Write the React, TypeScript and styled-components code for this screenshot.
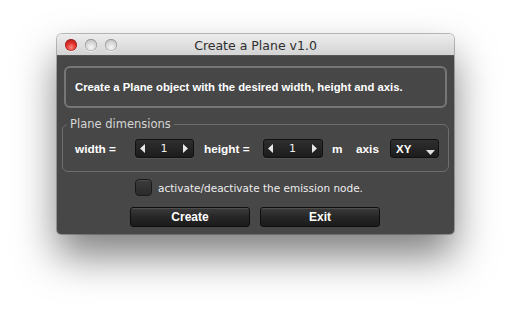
import React from "react";
import styled, { createGlobalStyle } from "styled-components";

const Global = createGlobalStyle`
  html, body { margin: 0; padding: 0; background: #ffffff; }
  body { font-family: "DejaVu Sans", "Liberation Sans", sans-serif; }
  * { box-sizing: border-box; }
`;

const boldFont = `"Liberation Sans", Arial, sans-serif`;

const Page = styled.div`
  width: 511px;
  height: 313px;
  padding: 34px 0 0 57px;
  background: #ffffff;
`;

const Window = styled.div`
  width: 397px;
  border-radius: 5px 5px 4px 4px;
  box-shadow: 0 22px 40px rgba(0, 0, 0, 0.5), 0 0 0 1px rgba(0, 0, 0, 0.25);
  overflow: hidden;
`;

const TitleBar = styled.div`
  height: 22px;
  display: flex;
  align-items: center;
  background: linear-gradient(#ededed, #d3d3d3);
  border-bottom: 1px solid #555;
  padding-left: 8px;
`;

const Lights = styled.div`
  display: flex;
  gap: 8px;
`;

const Light = styled.span<{ $red?: boolean }>`
  width: 12px;
  height: 12px;
  border-radius: 50%;
  display: block;
  background: ${(p) =>
    p.$red
      ? "radial-gradient(circle at 50% 70%, #ff8a80 0%, #e0302a 45%, #a0100c 100%)"
      : "radial-gradient(circle at 50% 70%, #f6f6f6 0%, #d6d6d6 50%, #a4a4a4 100%)"};
  box-shadow: inset 0 0 0 0.5px rgba(0, 0, 0, 0.35), 0 1px 0 rgba(255, 255, 255, 0.6);
`;

const Title = styled.div`
  flex: 1;
  text-align: center;
  margin-left: -60px;
  font-size: 12.5px;
  color: #2e2e2e;
  padding-top: 1px;
`;

const Body = styled.div`
  height: 178px;
  background: #474747;
  padding: 10px 7px 0 5px;
  display: flex;
  flex-direction: column;
`;

const InfoBox = styled.div`
  margin-left: 2px;
  width: 383px;
  height: 42px;
  border: 2px solid #767676;
  border-radius: 6px;
  display: flex;
  align-items: center;
  padding-left: 9px;
  color: #ffffff;
  font-family: ${boldFont};
  font-weight: bold;
  font-size: 11.3px;
`;

const Group = styled.fieldset`
  margin: 9px 0 0 0;
  padding: 0;
  width: 387px;
  height: 55px;
  border: 1.5px solid #6e6e6e;
  border-radius: 6px;
  min-width: 0;
`;

const Legend = styled.legend`
  margin-left: 4px;
  padding: 0 3px;
  font-size: 11.5px;
  color: #d6d6d6;
  line-height: 14px;
`;

const Row = styled.div`
  display: flex;
  align-items: center;
  height: 19px;
  margin-top: 8px;
  padding-left: 12px;
`;

const Label = styled.span<{ $w: number; $pad?: number }>`
  width: ${(p) => p.$w}px;
  padding-left: ${(p) => p.$pad ?? 0}px;
  flex: none;
  color: #ffffff;
  font-family: ${boldFont};
  font-weight: bold;
  font-size: 11.8px;
  white-space: nowrap;
`;

const Spinner = styled.div<{ $w: number }>`
  width: ${(p) => p.$w}px;
  height: 19px;
  flex: none;
  border: 1px solid #111;
  border-radius: 3px;
  background: linear-gradient(#2e2e2e, #1c1c1c);
  box-shadow: 0 1px 0 rgba(255, 255, 255, 0.08);
  display: flex;
  align-items: center;
  justify-content: space-between;
  padding: 0 5px 0 4px;
  color: #f0f0f0;
  font-size: 11px;
`;

const Arrow = styled.svg`
  width: 5px;
  height: 9px;
  display: block;
  fill: #e8e8e8;
`;

const Select = styled.div`
  width: 49px;
  height: 19px;
  flex: none;
  border: 1px solid #111;
  border-radius: 3px;
  background: linear-gradient(#2e2e2e, #1c1c1c);
  display: flex;
  align-items: center;
  justify-content: space-between;
  padding: 0 3px 0 5px;
  color: #ffffff;
  font-family: ${boldFont};
  font-weight: bold;
  font-size: 11.5px;
`;

const Caret = styled.svg`
  width: 9px;
  height: 5px;
  margin-top: 7px;
  fill: #e0e0e0;
`;

const CheckRow = styled.label`
  display: flex;
  align-items: center;
  margin: 7px 0 0 73px;
  color: #ededed;
  font-size: 10.5px;
  gap: 6px;
`;

const Check = styled.span`
  width: 17px;
  height: 17px;
  border: 1px solid #1a1a1a;
  border-radius: 4px;
  background: linear-gradient(#3c3c3c, #2a2a2a);
  box-shadow: inset 0 1px 0 rgba(255, 255, 255, 0.08);
  display: block;
`;

const Buttons = styled.div`
  display: flex;
  gap: 10px;
  margin: 11px 0 0 68px;
`;

const Button = styled.button`
  width: 120px;
  height: 20px;
  border: 1px solid #0e0e0e;
  border-radius: 3px;
  background: linear-gradient(#3c3c3c, #262626 50%, #1b1b1b);
  box-shadow: inset 0 1px 0 rgba(255, 255, 255, 0.1);
  color: #ffffff;
  font-family: ${boldFont};
  font-weight: bold;
  font-size: 12px;
  padding: 0;
`;

const Left = () => (
  <Arrow viewBox="0 0 5 9">
    <polygon points="5,0 5,9 0,4.5" />
  </Arrow>
);
const Right = () => (
  <Arrow viewBox="0 0 5 9">
    <polygon points="0,0 0,9 5,4.5" />
  </Arrow>
);

export default function App() {
  return (
    <Page>
      <Global />
      <Window>
        <TitleBar>
          <Lights>
            <Light $red />
            <Light />
            <Light />
          </Lights>
          <Title>Create a Plane v1.0</Title>
        </TitleBar>
        <Body>
          <InfoBox>Create a Plane object with the desired width, height and axis.</InfoBox>
          <Group>
            <Legend>Plane dimensions</Legend>
            <Row>
              <Label $w={60}>width =</Label>
              <Spinner $w={59}>
                <Left />
                <span>1</span>
                <Right />
              </Spinner>
              <Label $w={69} $pad={10}>height =</Label>
              <Spinner $w={60}>
                <Left />
                <span>1</span>
                <Right />
              </Spinner>
              <Label $w={33} $pad={9}>m</Label>
              <Label $w={34}>axis</Label>
              <Select>
                <span>XY</span>
                <Caret viewBox="0 0 9 5">
                  <polygon points="0,0 9,0 4.5,5" />
                </Caret>
              </Select>
            </Row>
          </Group>
          <CheckRow>
            <Check />
            activate/deactivate the emission node.
          </CheckRow>
          <Buttons>
            <Button>Create</Button>
            <Button>Exit</Button>
          </Buttons>
        </Body>
      </Window>
    </Page>
  );
}
